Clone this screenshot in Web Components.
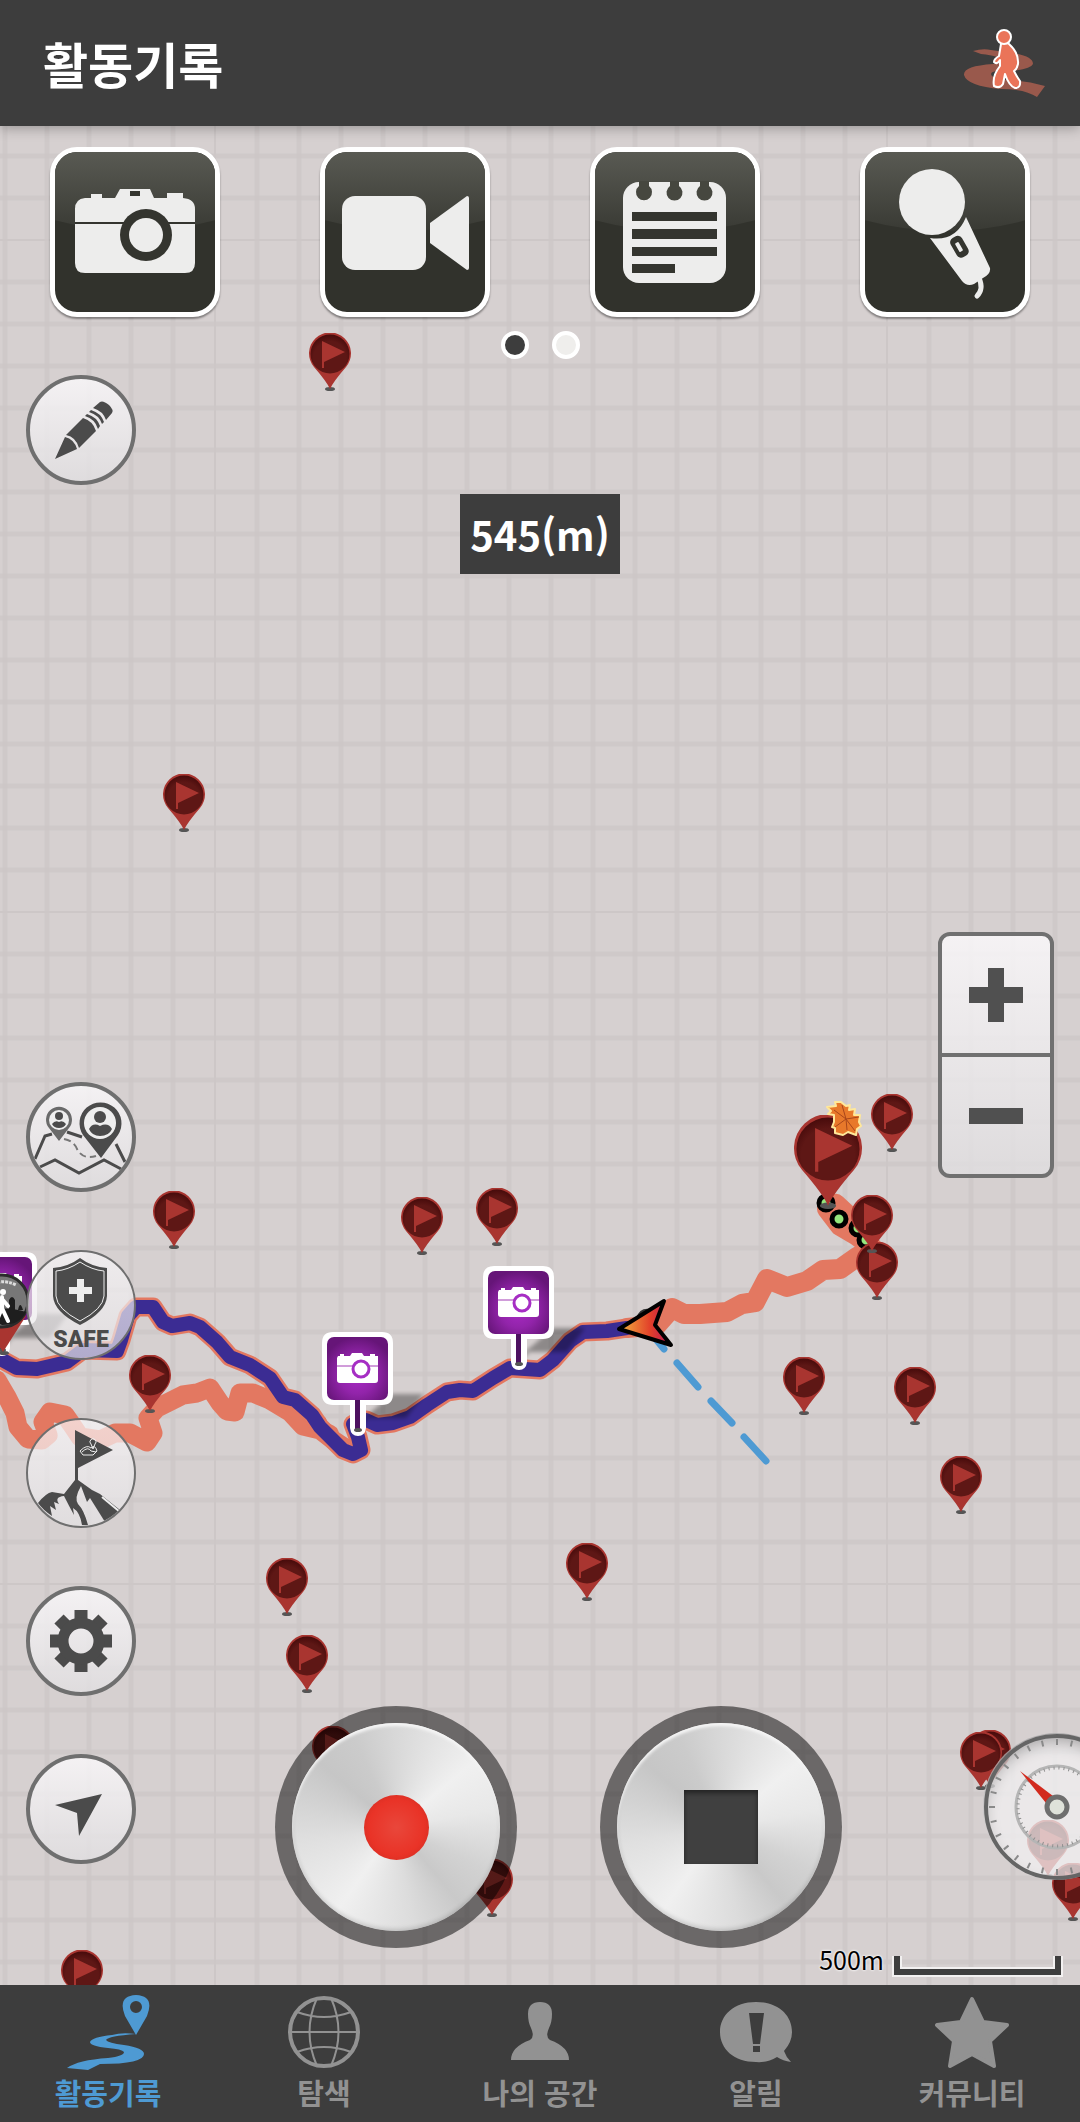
<!DOCTYPE html>
<html lang="ko">
<head>
<meta charset="utf-8">
<meta name="viewport" content="width=device-width, initial-scale=1">
<title>활동기록</title>
<style>
body {
  margin: 0;
  font-family: "Noto Sans CJK KR", "Noto Sans", sans-serif;
}
</style>
</head>
<body>

    <track-app></track-app>

    <template id="track-app">
        <style>
        :host {
          display: flex;
          flex-direction: column;
          min-height: 100vh;
          background: #3d3d3d;
        }
        map-view { flex: 1; }
        </style>
        <app-header>
            활동기록
            <svg slot="action" width="84" height="70" viewBox="0 0 84 70">
                <path fill="#99594c" d="M10 23 Q20 20 28 22 L42 24 Q70 27 70 36 Q68 41 48 43 Q28 42 28 46 Q28 50 42 52 Q62 52 82 58 L74 69 Q62 61 38 61 Q4 58 1 47 Q0 38 30 36 L42 34 Q38 28 18 26 Z"/>
                <g stroke="#fff" stroke-width="2" fill="#ea7459" stroke-linejoin="round">
                    <path d="M38 16 Q42 13 46 16 Q56 25 55 36 Q54 41 51 43 Q54 49 57 53 Q58 60 52 60 Q46 58 42 46 L40 56 Q37 61 31 58 Q29 48 37 38 L37 32 Q34 37 31 34 Q31 31 36 28 Z"/>
                    <circle cx="41" cy="9" r="7"/>
                </g>
            </svg>
        </app-header>
        <map-view></map-view>
        <tab-bar>
            <tab-item active>
                <svg slot="icon" width="84" height="76" viewBox="0 0 84 76" fill="currentColor">
                    <path fill-rule="evenodd" d="M70 41 L59 22 Q51 2 70 1 Q89 2 81 22 Z M70 7 a6 6 0 1 0 0 12 a6 6 0 1 0 0 -12"/>
                    <path d="M70 40 Q42 42 40 46 Q42 49 58 51 Q78 54 78 60 Q78 70 34 70 L22 76 L1 74 Q12 66 42 64 Q58 62 58 58 Q56 55 42 54 Q24 52 24 48 Q26 43 46 41 Q56 38 70 40 Z"/>
                </svg>
                활동기록
            </tab-item>
            <tab-item>
                <svg slot="icon" width="76" height="76" viewBox="0 0 76 76" fill="none" stroke="currentColor" stroke-width="2">
                    <circle cx="38" cy="38" r="34" stroke-width="4"/>
                    <path d="M3 38 H73 M11 18 Q38 28 65 18 M11 58 Q38 48 65 58 M31 4 Q16 38 31 72 M45 4 Q60 38 45 72"/>
                </svg>
                탐색
            </tab-item>
            <tab-item>
                <svg slot="icon" width="76" height="76" viewBox="0 0 76 76" fill="currentColor">
                    <path d="M38 8 Q50 8 50 20 Q50 28 47 34 Q43 43 48 46 Q67 53 67 66 H9 Q9 53 28 46 Q33 43 29 34 Q26 28 26 20 Q26 8 38 8 Z"/>
                </svg>
                나의 공간
            </tab-item>
            <tab-item>
                <svg slot="icon" width="76" height="76" viewBox="0 0 76 76" fill="currentColor">
                    <path fill-rule="evenodd" d="M38 8 C60 8 74 21 74 38 Q74 48 66 57 Q68 63 73 68 Q65 67 59 63 Q49 69 38 68 C16 68 2 55 2 38 C2 21 16 8 38 8 Z M31 19 L35 50 H42 L46 19 Z M35 52 V58 H42 V52 Z"/>
                </svg>
                알림
            </tab-item>
            <tab-item>
                <svg slot="icon" width="76" height="76" viewBox="0 0 76 76" fill="currentColor" stroke="currentColor" stroke-width="4" stroke-linejoin="round">
                    <path d="M38 5 L49 28 L73 31 L56 47 L60 72 L38 60 L16 72 L20 47 L3 31 L27 28 Z"/>
                </svg>
                커뮤니티
            </tab-item>
        </tab-bar>
    </template>

    <template id="app-header">
        <style>
        :host {
          display: flex;
          align-items: center;
          justify-content: space-between;
          box-sizing: border-box;
          height: 126px;
          padding: 0 33px 0 43px;
          background: #3d3d3d;
          color: #fff;
          position: relative;
          z-index: 1;
          box-shadow: 0 2px 12px rgba(0, 0, 0, .3);
        }
        h1 { margin: 0; font-size: 49px; line-height: 64px; font-weight: 700; }
        button { padding: 0; border: 0; background: none; height: 70px; }
        </style>
        <h1><slot></slot></h1>
        <button aria-label="걷기"><slot name="action"></slot></button>
    </template>

    <template id="map-view">
        <style>
        :host {
          display: flex;
          flex-direction: column;
          position: relative;
          overflow: hidden;
        }
        map-canvas { position: absolute; inset: 0; }
        .quick, .dots, .tools, .panel { position: relative; }
        .quick {
          display: grid;
          grid-template-columns: repeat(4, 1fr);
          justify-items: center;
          padding-top: 21px;
        }
        .dots { display: flex; justify-content: center; gap: 23px; margin-top: 14px; }
        .dots i {
          width: 20px;
          height: 20px;
          border: 4px solid #fff;
          border-radius: 50%;
          background: #efeeec;
        }
        .dots i.on { background: #3d3d3d; }
        .tools { display: flex; padding: 16px 26px 0; }
        output {
          position: relative;
          align-self: center;
          margin-top: 9px;
          padding: 8px 10px;
          background: #3d3d3d;
          color: #fff;
          font-size: 40px;
          line-height: 64px;
          font-weight: 700;
        }
        .panel {
          flex: 1;
          display: grid;
          grid-template-columns: 136px 1fr 97px;
          align-items: end;
        }
        .menu {
          grid-area: 1 / 1;
          display: flex;
          flex-direction: column;
          gap: 58px;
          padding: 0 0 121px 26px;
        }
        .record {
          grid-area: 1 / 2;
          display: flex;
          justify-content: center;
          gap: 83px;
          padding: 0 2px 37px 0;
        }
        .side {
          grid-area: 1 / 3;
          display: flex;
          flex-direction: column;
          align-items: flex-end;
          gap: 555px;
          padding-bottom: 105px;
        }
        zoom-control { margin-right: 26px; }
        compass-dial { margin-right: -50px; }
        scale-bar { grid-area: 1 / 2 / 2 / 4; justify-self: end; margin: 0 17px 8px 0; }
        .dark { fill: #34352f; }
        .red {
          width: 65px;
          height: 65px;
          border-radius: 50%;
          background: radial-gradient(circle, #e9473b 0, #e93327 60%, #c42a20 100%);
        }
        .square { width: 74px; height: 74px; background: #404040; box-shadow: inset 0 3px 5px #222; }
        .safe { fill: #4b4b4b; font: 900 23px Roboto, sans-serif; }
        </style>
        <map-canvas></map-canvas>
        <div class="quick">
            <quick-button label="사진">
                <svg width="170" height="170" viewBox="0 0 170 170" fill="#ededec">
                    <path d="M35 51 H41 V47 H52 V51 H65 L70 42 H100 L104 51 H117 V46 H133 V51 Q145 52 145 62 V116 Q145 126 135 126 H35 Q25 126 25 116 V62 Q25 52 35 51 Z"/>
                    <path class="dark" d="M80 44 H90 V49 H80 Z M25 75 H145 V77 H25 Z"/>
                    <circle class="dark" cx="96" cy="88" r="26"/>
                    <circle cx="96" cy="88" r="17"/>
                </svg>
            </quick-button>
            <quick-button label="동영상">
                <svg width="170" height="170" viewBox="0 0 170 170" fill="#ededec">
                    <rect x="22" y="49" width="84" height="74" rx="13"/>
                    <path d="M110 76 L147 49 Q149 49 149 51 V121 Q149 123 147 123 L110 96 Z"/>
                </svg>
            </quick-button>
            <quick-button label="메모">
                <svg width="170" height="170" viewBox="0 0 170 170" fill="#ededec">
                    <rect x="33" y="35" width="103" height="101" rx="16"/>
                    <path fill="#46473f" d="M49 34 H59 V39 A8 8 0 1 1 49 39 Z M80 34 H89 V39 A8 8 0 1 1 80 39 Z M110 34 H119 V39 A8 8 0 1 1 110 39 Z"/>
                    <path class="dark" d="M42 65 H127 V74 H42 Z M42 82 H127 V92 H42 Z M42 100 H127 V109 H42 Z M42 117 H85 V126 H42 Z"/>
                </svg>
            </quick-button>
            <quick-button label="음성">
                <svg width="170" height="170" viewBox="0 0 170 170" fill="#ededec">
                    <circle cx="72" cy="55" r="33"/>
                    <path d="M106 70 L130 121 Q131 127 123 131 L114 137 Q107 140 102 134 L70 91 Q96 95 106 70 Z"/>
                    <path d="M119 131 Q124 142 117 149" fill="none" stroke="#ededec" stroke-width="5" stroke-linecap="round"/>
                    <rect class="dark" x="93" y="89" width="13" height="22" rx="5" transform="rotate(-30 99 100)"/>
                    <rect x="97" y="95" width="4" height="10" rx="1" transform="rotate(-30 99 100)"/>
                </svg>
            </quick-button>
        </div>
        <div class="dots"><i class="on"></i><i></i></div>
        <div class="tools">
            <round-button label="그리기">
                <svg width="110" height="110" viewBox="0 0 110 110" fill="#4b4b4b">
                    <path d="M29 84 L39 62 Q48 64 51 74 Z M40 60 L57 43 Q67 46 70 56 L53 73 Q50 62 40 60 Z M59 41 L61 39 Q71 42 74 51 L72 54 Q69 44 59 41 Z M63 37 L65 35 Q75 38 78 47 L76 49 Q73 40 63 37 Z M67 33 L74 27 Q77 25 83 30 Q88 35 86 38 L80 45 Q77 36 67 33 Z"/>
                </svg>
            </round-button>
        </div>
        <output>545(m)</output>
        <div class="panel">
            <div class="menu">
                <round-button label="친구 위치">
                    <svg width="110" height="110" viewBox="0 0 110 110" fill="#4b4b4b">
                        <g fill="none" stroke="#4b4b4b" stroke-width="3">
                            <path d="M9 77 L19 54 L26 52 M41 50 L56 55 M90 62 L99 80 M14 85 L29 78 L53 91 L78 78 L97 88"/>
                            <path d="M38 57 Q48 59 51 67 Q57 78 70 74" stroke-width="2" stroke-dasharray="7 4" stroke="#777"/>
                        </g>
                        <path d="M33 59 L23 46 A13 13 0 1 1 43 46 Z" fill="#6a6a6a"/>
                        <circle cx="33" cy="38" r="10" fill="#eee"/>
                        <circle cx="33" cy="34" r="4"/>
                        <path d="M26 42 Q29 38 33 40 Q37 38 40 42 Q38 46 33 46 Q28 46 26 42 Z"/>
                        <path d="M75 76 L57 53 A21 21 0 1 1 92 53 Z"/>
                        <circle cx="74" cy="41" r="16" fill="#eee"/>
                        <circle cx="74" cy="35" r="6"/>
                        <path d="M63 47 Q67 40 74 44 Q82 40 86 47 Q83 54 74 54 Q66 54 63 47 Z"/>
                    </svg>
                </round-button>
                <round-button label="안전" thin>
                    <svg width="110" height="110" viewBox="0 0 110 110" fill="#4b4b4b">
                        <path d="M54 8 Q66 17 81 18 V46 Q80 62 54 75 Q28 62 27 46 V18 Q42 17 54 8 Z"/>
                        <path d="M54 12 Q66 20 78 21 V46 Q77 59 54 71 Q31 59 30 46 V21 Q42 20 54 12 Z" fill="none" stroke="#eee"/>
                        <path fill="#eee" d="M51 29 H58 V37 H66 V44 H58 V52 H51 V44 H43 V37 H51 Z"/>
                        <text class="safe" x="55" y="97" text-anchor="middle">SAFE</text>
                    </svg>
                </round-button>
                <round-button label="정상" thin>
                    <svg width="110" height="110" viewBox="0 0 110 110" fill="#4b4b4b">
                        <path d="M49 12 L87 32 L52 50 V62 L66 72 L74 76 L94 92 Q86 101 79 104 L64 80 L61 84 L55 68 Q48 80 52 86 Q58 92 62 107 H56 Q54 94 47 90 L48 97 Q43 88 38 78 Q28 79 33 86 L28 84 L30 92 L24 88 L26 98 Q17 92 12 85 Q20 75 26 74 L38 76 L49 62 Z"/>
                        <path d="M76 79 L94 94" stroke="#eee" stroke-width="2"/>
                        <path d="M54 33 Q61 26 65 30 Q69 26 71 33 L67 37 H57 Z M56 34 Q62 28 65 33 L70 34 M65 26 a3 3 0 1 1 4 0 L67 31 Z" fill="none" stroke="#eee"/>
                    </svg>
                </round-button>
                <round-button label="설정">
                    <svg width="110" height="110" viewBox="0 0 110 110" fill="none" stroke="#4b4b4b">
                        <path stroke-width="13" d="M55 24 V40 M55 70 V86 M24 55 H40 M70 55 H86 M33 33 L45 45 M65 65 L77 77 M77 33 L65 45 M45 65 L33 77"/>
                        <circle cx="55" cy="55" r="18" stroke-width="11"/>
                    </svg>
                </round-button>
                <round-button label="현재 위치">
                    <svg width="110" height="110" viewBox="0 0 110 110" fill="#4b4b4b">
                        <path d="M76 40 L53 82 L51 59 L29 51 Z"/>
                    </svg>
                </round-button>
            </div>
            <div class="record">
                <record-button label="기록 시작"><div class="red"></div></record-button>
                <record-button label="기록 종료"><div class="square"></div></record-button>
            </div>
            <scale-bar>500m</scale-bar>
            <div class="side">
                <zoom-control></zoom-control>
                <compass-dial></compass-dial>
            </div>
        </div>
    </template>

    <!-- Tiles, tracks and markers; coordinates are pixels from the map's top left corner. -->
    <template id="map-canvas">
        <style>
        :host { display: block; overflow: hidden; background: #d6d0d0; }
        svg { display: block; width: 100%; height: 100%; }
        map-pin, photo-marker, svg.over { position: absolute; }
        svg.over { left: 0; top: 0; width: 900px; height: 1260px; }
        </style>
        <svg>
            <defs>
                <pattern id="tile" x="215" y="114" width="672" height="672" patternUnits="userSpaceOnUse">
                    <g id="rows" stroke="#cdc7c7">
                        <path stroke-width="5" stroke-opacity=".8" d="M0 42h672m-672 42h672m-672 42h672m-672 42h672m-672 42h672m-672 42h672m-672 42h672m-672 42h672m-672 42h672m-672 42h672m-672 42h672m-672 42h672m-672 42h672m-672 42h672m-672 42h672"/>
                        <path stroke-width="2" d="M0 0H672M0 672H672"/>
                    </g>
                    <use href="#rows" transform="matrix(0 1 1 0 0 0)"/>
                </pattern>
                <linearGradient id="heading">
                    <stop offset="0" stop-color="#f2b63f"/>
                    <stop offset=".6" stop-color="#e2402a"/>
                    <stop offset="1" stop-color="#b8125a"/>
                </linearGradient>
            </defs>
            <rect width="100%" height="100%" fill="url(#tile)"/>
            <g transform="translate(0 -126)" fill="none" stroke-linecap="round" stroke-linejoin="round">
                <path stroke="#e37861" stroke-width="19" d="M-3 1380 L7 1397 L15 1413 L18 1427 L28 1439 L42 1440 L48 1435 L43 1422 L50 1412 L65 1415 L72 1425 L80 1437 L100 1440 L115 1433 L130 1433 L147 1442 L153 1433 L148 1418 L157 1408 L167 1403 L183 1395 L197 1393 L210 1388 L220 1403 L227 1411 L235 1412 L240 1393 L253 1393 L270 1400 L290 1412 L303 1426 L320 1430 L333 1440 L353 1453"/>
                <path stroke="#e37861" stroke-width="18" d="M285 1403 L318 1423 M300 1420 L330 1434"/>
                <path stroke="#e37861" stroke-width="20" d="M627 1328 L657 1325 L672 1308 L684 1314 L700 1314 L727 1312 L742 1304 L755 1302 L767 1279 L787 1287 L807 1281 L823 1270 L840 1269 L857 1257 L873 1248 L857 1236 L840 1226 L827 1209 L836 1204 L850 1217 L866 1238"/>
                <path stroke="#e37861" stroke-width="19" d="M-3 1357 L17 1368 L37 1369 L67 1362 L83 1350 L117 1351 L121 1340 L128 1316 L136 1307 L153 1307 L163 1322 L172 1326 L190 1323 L200 1327 L217 1342 L230 1357 L250 1365 L270 1378 L283 1397 L295 1400 L312 1415 L320 1427 L343 1450 L353 1454 L361 1450 L358 1437 L353 1424 L366 1420 L377 1425 L393 1423 L410 1417 L427 1405 L447 1392 L460 1390 L473 1391 L493 1378 L510 1368 L540 1370 L553 1360 L570 1341 L583 1332 L607 1331 L627 1328"/>
                <path stroke="#3b2c93" stroke-width="14" d="M-3 1357 L17 1368 L37 1369 L67 1362 L83 1350 L117 1351 L121 1340 L128 1316 L136 1307 L153 1307 L163 1322 L172 1326 L190 1323 L200 1327 L217 1342 L230 1357 L250 1365 L270 1378 L283 1397 L295 1400 L312 1415 L320 1427 L343 1450 L353 1454 L361 1450 L358 1437 L353 1424 L366 1420 L377 1425 L393 1423 L410 1417 L427 1405 L447 1392 L460 1390 L473 1391 L493 1378 L510 1368 L540 1370 L553 1360 L570 1341 L583 1332 L607 1331 L627 1328"/>
                <path stroke="#4e9ad3" stroke-width="7" d="M655 1338 L664 1349 M677 1363 L698 1387 M711 1401 L732 1423 M744 1437 L766 1461"/>
                <path fill="#333" d="M636 1318 Q640 1307 650 1309 L650 1320 Z"/>
                <path fill="url(#heading)" stroke="#000" stroke-width="4" d="M619 1329 L664 1301 L655 1325 L671 1345 Z"/>
                <g fill="#95e67d" stroke="#000" stroke-width="5">
                    <circle cx="866" cy="1240" r="7"/>
                    <circle cx="858" cy="1228" r="7"/>
                    <circle cx="826" cy="1203" r="7"/>
                    <circle cx="839" cy="1219" r="7"/>
                </g>
            </g>
        </svg>
        <div id="markers"></div>
        <svg class="over">
            <!-- maple leaf on the large pin -->
            <path d="M834 989 L828 988 L831 985 L827 981 L836 980 L835 976 L841 976 L846 980 L850 979 L849 984 L855 983 L854 989 L860 989 L859 996 L861 1000 L857 1003 L856 1009 L848 1006 L843 1009 L835 1007 L835 1002 L832 1001 L834 996 Z" fill="#e8782a" stroke="#ffe89a" stroke-width="2" stroke-linejoin="round"/>
            <path d="M834 984 L846 993 L855 1005 M846 993 L842 979 M846 993 L859 991 M846 993 L835 1001 M846 993 L847 1004" fill="none" stroke="#a8461b"/>
            <!-- walking course badge at the left edge -->
            <ellipse cx="4" cy="1227" rx="5" ry="2" fill="#555"/>
            <path d="M3 1226 L-20 1190 L26 1190 Z" fill="#a93530"/>
            <circle cx="2" cy="1175" r="26" fill="#777" stroke="#2b2b2b" stroke-width="3"/>
            <path d="M-20 1188 Q2 1178 26 1186 Q20 1199 2 1199 Z M9 1183 V1174 Q12 1168 15 1174 V1184 Z M18 1184 Q20 1174 23 1184 Z" fill="#1e1e1e"/>
            <circle cx="3" cy="1166" r="3" fill="#fff"/>
            <path d="M2 1171 V1182 L8 1195 M2 1182 L-3 1194 M2 1173 L8 1180" stroke="#fff" stroke-width="4" fill="none" stroke-linecap="round"/>
            <path d="M-10 1160 Q2 1152 16 1159" stroke="#ddd" stroke-width="3" stroke-dasharray="3 1" fill="none"/>
        </svg>
    </template>

    <template id="map-pin">
        <style>
        :host { display: block; width: 42px; height: 58px; }
        :host([large]) { width: 68px; height: 94px; }
        svg { display: block; width: 100%; height: 100%; }
        </style>
        <svg viewBox="0 0 42 58">
            <defs>
                <radialGradient id="g" cy=".6" r=".6">
                    <stop offset=".7" stop-color="#5e1715"/>
                    <stop offset="1" stop-color="#470b0b"/>
                </radialGradient>
            </defs>
            <ellipse cx="21" cy="56" rx="5" ry="2" fill="#555"/>
            <path d="M21 56 Q18 49 5 34 A21 21 0 1 1 37 34 Q24 49 21 56 Z" fill="#a93530"/>
            <circle cx="21" cy="21" r="19.5" fill="url(#g)"/>
            <path d="M13 8 L36 19 L15 29 V35 H13 Z" fill="#a93530"/>
        </svg>
    </template>

    <template id="photo-marker">
        <style>
        :host { display: block; width: 118px; height: 105px; }
        svg { display: block; }
        </style>
        <svg width="118" height="105" viewBox="0 0 118 105">
            <defs>
                <radialGradient id="g" cy=".6" r=".6">
                    <stop offset="0" stop-color="#aa2bc6"/>
                    <stop offset=".5" stop-color="#9224aa"/>
                    <stop offset="1" stop-color="#661578"/>
                </radialGradient>
                <filter id="soft"><feGaussianBlur stdDeviation="2"/></filter>
            </defs>
            <path d="M42 86 L70 62 H102 L84 86 H46 L38 96 Z" fill="rgba(0,0,0,.34)" filter="url(#soft)"/>
            <path d="M11 0 H60 Q71 0 71 11 V62 Q71 73 60 73 H44 V96 Q43 104 36 104 Q29 104 28 96 V73 H11 Q0 73 0 62 V11 Q0 0 11 0 Z" fill="#fff"/>
            <rect x="5" y="5" width="61" height="63" rx="7" fill="url(#g)"/>
            <path d="M33 68 H38 V97 H33 Z" fill="#4d1160"/>
            <ellipse cx="36" cy="98" rx="4" ry="2" fill="#555"/>
            <path d="M16 24 H18 V22 H22 V24 H28 L30 21 H40 L42 24 H48 V22 H53 V24 H56 V48 Q56 51 53 51 H18 Q15 51 15 48 V26 Z" fill="#fff"/>
            <path d="M15 34 H56" stroke="#a23bb5"/>
            <circle cx="39" cy="37" r="8" fill="#fff" stroke="#a62ec4" stroke-width="3"/>
        </svg>
    </template>

    <template id="quick-button">
        <style>
        :host { display: block; }
        button {
          display: grid;
          width: 170px;
          height: 170px;
          padding: 0;
          border: 5px solid #fff;
          border-radius: 27px;
          overflow: hidden;
          background: #31322c;
          box-shadow: 0 2px 2px rgba(0, 0, 0, .4);
        }
        .gloss, ::slotted(svg) { grid-area: 1 / 1; display: block; margin: -5px; }
        </style>
        <button>
            <svg class="gloss" width="170" height="170" viewBox="0 0 170 170">
                <defs>
                    <linearGradient id="g" x2="0" y2="1">
                        <stop offset="0" stop-color="#5b5c55"/>
                        <stop offset="1" stop-color="#393a34"/>
                    </linearGradient>
                </defs>
                <path d="M0 0 H170 V72 Q85 96 0 72 Z" fill="url(#g)"/>
            </svg>
            <slot></slot>
        </button>
    </template>

    <template id="round-button">
        <style>
        :host { display: block; }
        button {
          display: block;
          width: 110px;
          height: 110px;
          padding: 0;
          border: 4px solid #6f6f6f;
          border-radius: 50%;
          overflow: hidden;
          background: linear-gradient(rgba(250, 248, 250, .85), rgba(224, 222, 224, .8)) border-box;
        }
        ::slotted(svg) { display: block; margin: -4px; }
        :host([thin]) button { border-width: 2px; background: linear-gradient(rgba(250, 248, 250, .7), rgba(228, 226, 228, .7)) border-box; }
        :host([thin]) ::slotted(svg) { margin: -2px; }
        </style>
        <button><slot></slot></button>
    </template>

    <template id="record-button">
        <style>
        :host { display: block; }
        button {
          display: grid;
          width: 242px;
          height: 242px;
          padding: 17px;
          border: 0;
          border-radius: 50%;
          background: radial-gradient(circle, transparent 103px, rgba(0, 0, 0, .5) 104px);
        }
        span {
          display: grid;
          place-items: center;
          border-radius: 50%;
          background: conic-gradient(#d8d8d8, #f0f0f0 50deg, #e8e8e8 80deg, #d2d2d2 115deg, #c9c9c9 140deg, #dcdcdc 170deg, #f0f0f0 215deg, #e0e0e0 260deg, #c6c6c6 310deg, #cbcbcb 335deg, #d8d8d8);
          box-shadow: inset 0 3px 3px #f5f5f5, inset 0 -2px 4px rgba(0, 0, 0, .15);
        }
        </style>
        <button><span><slot></slot></span></button>
    </template>

    <template id="zoom-control">
        <style>
        :host {
          display: flex;
          flex-direction: column;
          box-sizing: border-box;
          width: 116px;
          height: 246px;
          border: 4px solid #707070;
          border-radius: 12px;
          background: linear-gradient(rgba(250, 248, 250, .85), rgba(224, 222, 224, .8));
        }
        button {
          flex: 1;
          display: grid;
          place-items: center;
          padding: 0;
          border: 0;
          background: none;
        }
        button + button { border-top: 4px solid #707070; }
        </style>
        <button aria-label="확대"><svg width="54" height="54"><path d="M19 0 H35 V19 H54 V35 H35 V54 H19 V35 H0 V19 H19 Z" fill="#505050"/></svg></button>
        <button aria-label="축소"><svg width="54" height="16"><path d="M0 0 H54 V16 H0 Z" fill="#505050"/></svg></button>
    </template>

    <template id="compass-dial">
        <style>
        :host {
          display: block;
          width: 147px;
          height: 147px;
          border-radius: 50%;
          background: rgba(242, 240, 242, .75);
          box-shadow: inset 0 8px 16px rgba(0, 0, 0, .3);
        }
        svg { display: block; }
        </style>
        <svg width="147" height="147" viewBox="-74 -74 147 147" fill="none">
            <circle r="71" stroke="#656565" stroke-width="4"/>
            <g id="ticks" stroke="#8a8a8a" stroke-width="2"></g>
            <circle r="41" stroke="#b5b5b5" stroke-width="3"/>
            <circle r="39" stroke="#8f8f8f" stroke-width="3" stroke-dasharray="1 4"/>
            <path d="M-37 -36 L-11 -4 L-4 -11 Z" fill="#d22a1e"/>
            <circle r="10" fill="#dfe2da" stroke="#6e6e6e" stroke-width="5"/>
        </svg>
    </template>

    <template id="scale-bar">
        <style>
        :host {
          display: flex;
          align-items: flex-end;
          gap: 8px;
          color: #000;
          font-size: 25px;
          line-height: 36px;
          text-shadow: 0 0 2px #fff, 0 0 3px #fff;
        }
        svg { display: block; }
        </style>
        <slot></slot>
        <svg width="171" height="23" fill="none">
            <path d="M5 2 V18 H166 V2" stroke="#f2f0f0" stroke-width="10"/>
            <path d="M5 2 V18 H166 V2" stroke="#3e3e3e" stroke-width="6"/>
        </svg>
    </template>

    <template id="tab-bar">
        <style>
        :host { display: block; background: #3d3d3d; }
        nav { display: grid; grid-template-columns: repeat(5, 1fr); }
        </style>
        <nav><slot></slot></nav>
    </template>

    <template id="tab-item">
        <style>
        :host { display: block; color: #929292; }
        :host([active]) { color: #4e9ad3; }
        a {
          display: flex;
          flex-direction: column;
          align-items: center;
          gap: 4px;
          padding: 9px 0 12px;
          color: inherit;
          text-decoration: none;
          font-size: 29px;
          line-height: 36px;
          font-weight: 700;
        }
        </style>
        <a href="#"><slot name="icon"></slot><span><slot></slot></span></a>
    </template>

    <script>
    // Clones the template that has the element's own name into an open shadow root.
    class BaseElement extends HTMLElement {
        constructor() {
          super();
          const tmpl = document.getElementById(this.localName);
          this.attachShadow({mode: 'open'});
          this.shadowRoot.appendChild(tmpl.content.cloneNode(true));
        }
    }

    class LabelledButton extends BaseElement {
        connectedCallback() {
          this.shadowRoot.querySelector('button').setAttribute('aria-label', this.getAttribute('label'));
        }
    }

    // [centre x, top y] of each pin, bottom-most first
    const PINS = [
      [330, 207], [184, 648], [174, 1065], [422, 1071], [497, 1062], [150, 1229],
      [892, 968], [877, 1116], [872, 1069], [804, 1231], [915, 1241], [961, 1330],
      [587, 1417], [287, 1432], [307, 1509], [333, 1600], [492, 1733], [990, 1604],
      [981, 1606], [1048, 1694], [1073, 1737], [82, 1824]
    ];
    const PHOTOS = [[-34, 1126], [322, 1206], [483, 1140]];

    class MapCanvas extends BaseElement {
        connectedCallback() {
          const box = this.shadowRoot.getElementById('markers');
          const add = (name, x, y) => {
            const el = document.createElement(name);
            el.style.left = x + 'px';
            el.style.top = y + 'px';
            box.appendChild(el);
            return el;
          };
          PINS.forEach(([x, y]) => add('map-pin', x - 21, y));
          add('map-pin', 794, 989).setAttribute('large', '');
          PHOTOS.forEach(([x, y]) => add('photo-marker', x, y));
        }
    }

    class CompassDial extends BaseElement {
        connectedCallback() {
          let ticks = '';
          for (let a = 0; a < 360; a += 360 / 28) {
            ticks += `<path d="M0 -68 V-62" transform="rotate(${a})"/>`;
          }
          this.shadowRoot.getElementById('ticks').innerHTML = ticks;
        }
    }

    customElements.define('map-pin', class extends BaseElement {});
    customElements.define('photo-marker', class extends BaseElement {});
    customElements.define('map-canvas', MapCanvas);
    customElements.define('quick-button', class extends LabelledButton {});
    customElements.define('round-button', class extends LabelledButton {});
    customElements.define('record-button', class extends LabelledButton {});
    customElements.define('zoom-control', class extends BaseElement {});
    customElements.define('compass-dial', CompassDial);
    customElements.define('scale-bar', class extends BaseElement {});
    customElements.define('app-header', class extends BaseElement {});
    customElements.define('map-view', class extends BaseElement {});
    customElements.define('tab-item', class extends BaseElement {});
    customElements.define('tab-bar', class extends BaseElement {});
    customElements.define('track-app', class extends BaseElement {});
    </script>

</body>
</html>
